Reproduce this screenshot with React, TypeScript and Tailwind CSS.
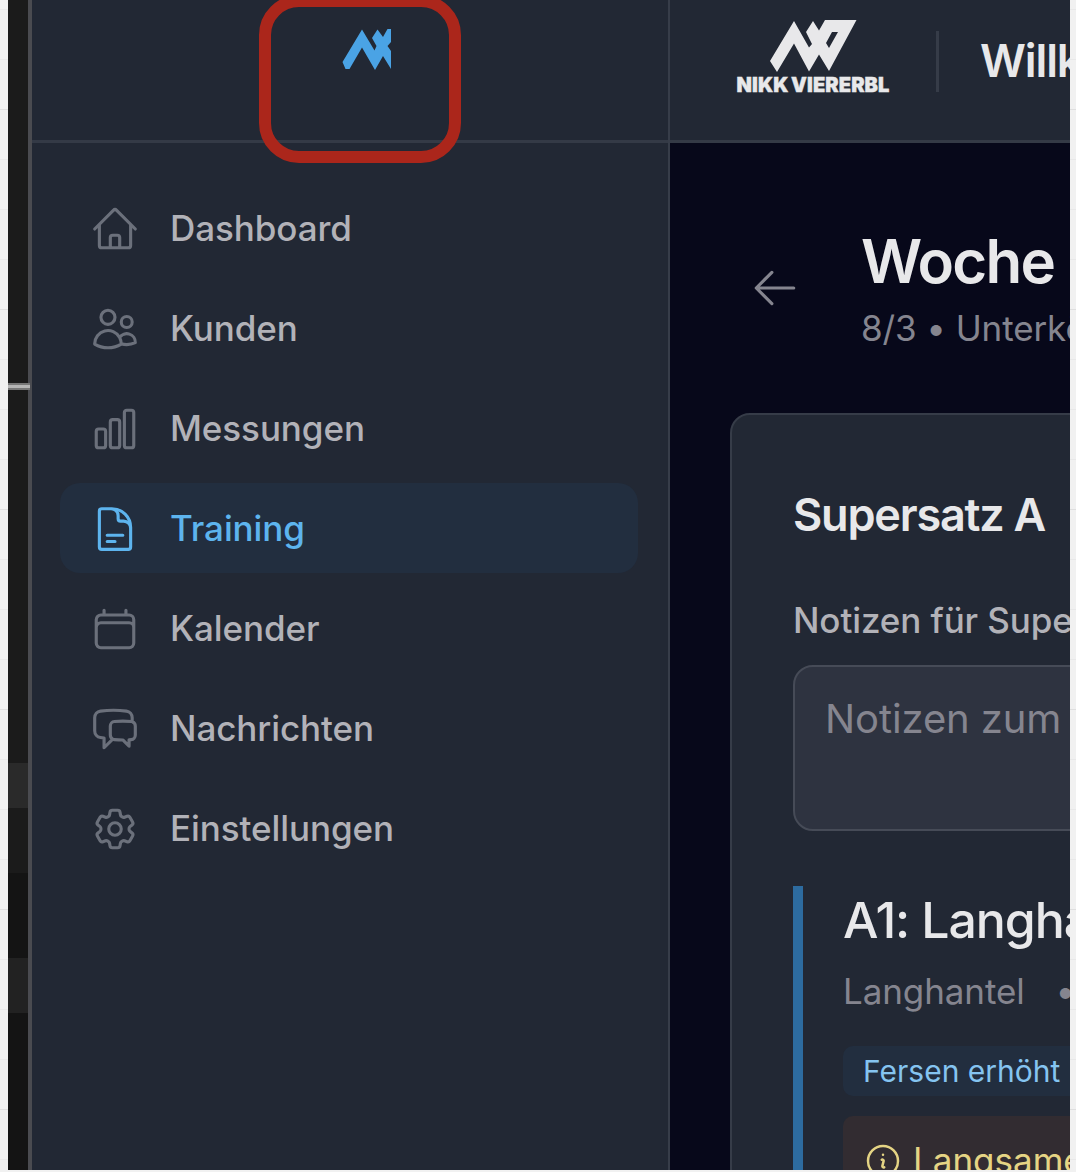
import type { ComponentType, ReactNode } from "react";
import {
  HiOutlineHome,
  HiOutlineUsers,
  HiOutlineChartBar,
  HiOutlineDocumentText,
  HiOutlineCalendar,
  HiOutlineChatBubbleLeftRight,
  HiOutlineCog6Tooth,
  HiOutlineArrowLeft,
  HiOutlineInformationCircle,
} from "react-icons/hi2";

type NavItem = { label: string; icon: ComponentType<{ className?: string }>; active?: boolean };

const navItems: NavItem[] = [
  { label: "Dashboard", icon: HiOutlineHome },
  { label: "Kunden", icon: HiOutlineUsers },
  { label: "Messungen", icon: HiOutlineChartBar },
  { label: "Training", icon: HiOutlineDocumentText, active: true },
  { label: "Kalender", icon: HiOutlineCalendar },
  { label: "Nachrichten", icon: HiOutlineChatBubbleLeftRight },
  { label: "Einstellungen", icon: HiOutlineCog6Tooth },
];

function SidebarLogo() {
  return (
    <svg viewBox="0 0 50 44" className="h-11 w-[50px]" fill="#4aa3e5">
      <path d="M1.5 35 21 2.5 33.5 23.5 35.5 19 31 11 36.5 2.5 42 10 46.5 2H50V15L46.5 19 50 24V42L42 29 34 43 21 20.5 8.5 42H4.5Z" />
    </svg>
  );
}

function BrandLogo() {
  return (
    <div className="flex w-[156px] flex-col items-center">
      <svg viewBox="0 0 88 53" className="h-[53px] w-[88px]" fill="#e8e8ea">
        <path
          fillRule="evenodd"
          d="M1 42 25 2 40 28.5 43 25 37 13 44 2 50 11.5 56 1H87.5L60 52 50 35.5 40 52.5 25 24.5 8 53ZM57 24 63 13H69L60 29Z"
        />
      </svg>
      <span className="mt-[2px] text-[20px] leading-[22px] font-black tracking-[0.1px] [word-spacing:-1.5px] whitespace-nowrap text-[#e8e8ea] [-webkit-text-stroke:0.4px_#e8e8ea]">
        NIKK VIERERBL
      </span>
    </div>
  );
}

function Ruled({ className }: { className: string }) {
  return (
    <div
      className={`shrink-0 bg-[#f1f1f1] bg-[linear-gradient(#dfdfdf_1px,transparent_1px),linear-gradient(#e9e9e9_1px,transparent_1px)] bg-[size:100%_200px,100%_50px] bg-[position:0_109px,0_9px] ${className}`}
    />
  );
}

function EditorStrip() {
  return (
    <div className="flex w-[20px] shrink-0 flex-col bg-[#1b1b1b]">
      <div className="h-[383px]" />
      <div className="relative z-10 h-[7px] w-[22px] border-y-2 border-[#777] bg-[#b5b5b5]" />
      <div className="h-[373px]" />
      <div className="h-[45px] bg-[#2a2a2a]" />
      <div className="h-[65px]" />
      <div className="h-[85px] bg-[#141414]" />
      <div className="h-[55px] bg-[#222222]" />
      <div className="grow bg-[#141414]" />
    </div>
  );
}

function Line({ className = "", children }: { className?: string; children: ReactNode }) {
  return <div className={`whitespace-nowrap ${className}`}>{children}</div>;
}

export default function App() {
  return (
    <div className="flex h-[1172px] w-[1076px] overflow-hidden bg-[#f1f1f1] font-['Inter',sans-serif]">
      <Ruled className="w-[8px]" />
      <div className="flex h-[1170px] w-[1062px] shrink-0 overflow-hidden bg-[#222834]">
        <EditorStrip />
        <aside className="relative flex w-[642px] shrink-0 flex-col border-r-2 border-l-4 border-r-[#373d49] border-l-[#4a4b50]">
          <header className="flex h-[143px] shrink-0 justify-center border-b-[3px] border-[#343a46] pt-[27px] pl-[32px]">
            <SidebarLogo />
          </header>
          <div className="absolute top-[-5px] left-[227px] h-[168px] w-[202px] rounded-[40px] border-12 border-[#ab261b]" />
          <nav className="flex flex-col gap-[10px] pt-[40px] pr-[30px] pl-[28px]">
            {navItems.map(({ label, icon: Icon, active }) => (
              <a
                key={label}
                className={`flex h-[90px] items-center gap-[30px] rounded-[20px] pl-[30px] text-[35px] font-medium tracking-[-0.08px] ${
                  active ? "bg-[#222e3f] text-[#5db4ee]" : "text-[#b2b2b8]"
                }`}
              >
                <Icon className={`mt-px size-[50px] shrink-0 ${active ? "" : "text-[#6b707b]"}`} />
                <span className="mt-px">{label}</span>
              </a>
            ))}
          </nav>
        </aside>
        <main className="flex w-[400px] shrink-0 flex-col overflow-hidden bg-[#07081a]">
          <header className="flex h-[143px] shrink-0 border-b-[3px] border-[#343a46] bg-[#222834] pl-[65px]">
            <div className="pt-[19px]">
              <BrandLogo />
            </div>
            <div className="mt-[31px] ml-[45px] h-[61px] w-[3px] shrink-0 bg-[#363c48]" />
            <Line className="mt-[36px] ml-[41px] text-[45px] leading-[50px] font-semibold tracking-[-1.1px] text-[#e8e8ea]">
              Willkommen
            </Line>
          </header>
          <div className="flex h-[270px] shrink-0 pt-[88px] pl-[80px]">
            <HiOutlineArrowLeft className="mt-[32px] size-[50px] shrink-0 text-[#85858f]" />
            <div className="ml-[61px]">
              <Line className="text-[60px] leading-[60px] font-semibold tracking-[-1.7px] text-[#e8e8ea]">Woche 1</Line>
              <Line className="mt-[12px] text-[35px] leading-[50px] tracking-[-0.1px] text-[#85858f]">8/3 • Unterkörper</Line>
            </div>
          </div>
          <section className="ml-[60px] h-[800px] w-[600px] rounded-tl-[20px] border-2 border-[#363c48] bg-[#222834] pt-[73px] pl-[61px]">
            <Line className="text-[45px] leading-[54px] font-semibold tracking-[-1.2px] text-[#e8e8ea]">Supersatz A</Line>
            <Line className="mt-[53px] text-[35px] leading-[50px] font-medium tracking-[-0.1px] text-[#b2b2b8]">
              Notizen für Supersatz A
            </Line>
            <div className="mt-[20px] h-[166px] w-[500px] rounded-[20px] border-2 border-[#464b57] bg-[#2e3340] pt-[22px] pl-[30px]">
              <Line className="text-[40px] leading-[60px] tracking-[-0.1px] text-[#85858f]">Notizen zum Supersatz</Line>
            </div>
            <article className="mt-[55px] h-[320px] border-l-[10px] border-[#2d6b9f] pt-[9px] pl-[40px]">
              <Line className="text-[50px] leading-[50px] font-medium tracking-[-1.1px] text-[#e8e8ea]">A1: Langhantel</Line>
              <div className="mt-[21px] flex gap-[31px] text-[35px] leading-[50px] tracking-[-0.1px] text-[#85858f]">
                <Line>Langhantel</Line>
                <span>•</span>
              </div>
              <div className="mt-[30px] flex h-[50px] w-[400px] items-center rounded-[10px] bg-[#222e3f] pl-[20px]">
                <Line className="text-[30px] leading-[40px] text-[#85c4f0]">Fersen erhöht</Line>
              </div>
              <div className="mt-[20px] flex h-[100px] w-[400px] rounded-[10px] bg-[#322c31] pt-[19px] pl-[20px] text-[#e5d484]">
                <HiOutlineInformationCircle className="mt-[6px] size-[40px] shrink-0" />
                <Line className="ml-[10px] text-[35px] leading-[50px]">Langsame</Line>
              </div>
            </article>
          </section>
        </main>
      </div>
      <Ruled className="w-[6px]" />
    </div>
  );
}
